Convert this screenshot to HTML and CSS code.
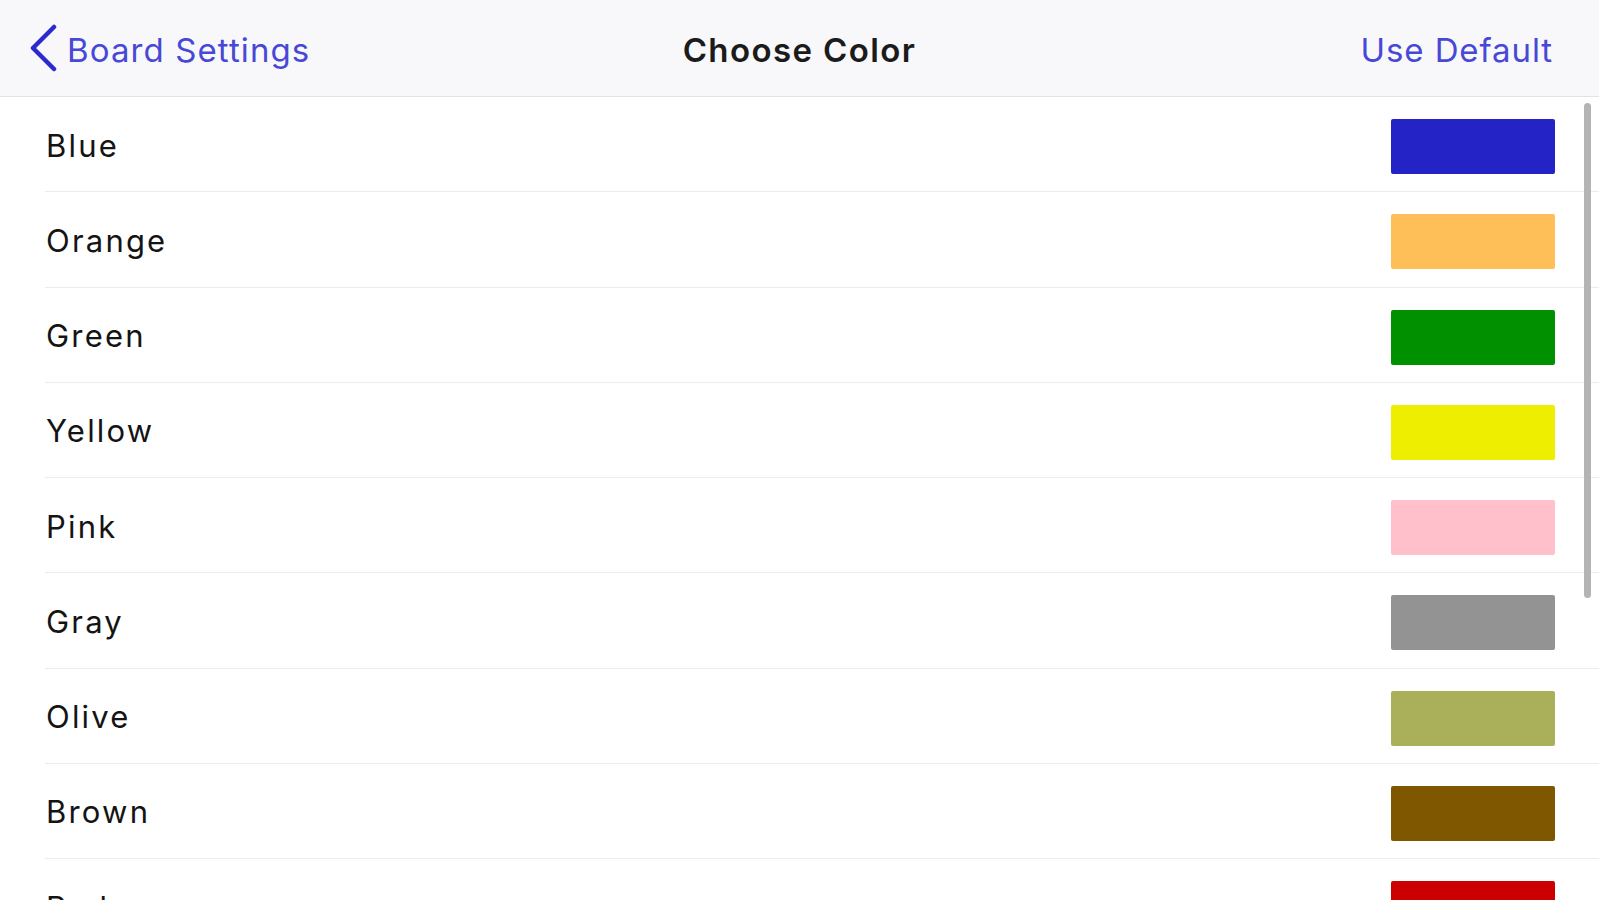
FILE: index.html
```html
<!DOCTYPE html>
<html>
<head>
<meta charset="utf-8">
<link rel="stylesheet" href="styles.css">
</head>
<body>
<header class="navbar">
  <a class="nav-back">
    <svg class="chevron" width="30" height="48" viewBox="0 0 30 48"><path d="M24 3 L3 24 L24 45" fill="none" stroke="#2a2ad0" stroke-width="4.5" stroke-linecap="round" stroke-linejoin="round"/></svg>
    <span>Board Settings</span>
  </a>
  <h1 class="nav-title">Choose Color</h1>
  <a class="nav-action">Use Default</a>
</header>
<main class="list">
  <div class="row"><span class="label">Blue</span><span class="swatch" style="background:#2424c6"></span></div>
  <div class="row"><span class="label">Orange</span><span class="swatch" style="background:#ffbf58"></span></div>
  <div class="row"><span class="label">Green</span><span class="swatch" style="background:#009000"></span></div>
  <div class="row"><span class="label">Yellow</span><span class="swatch" style="background:#eeee00"></span></div>
  <div class="row"><span class="label">Pink</span><span class="swatch" style="background:#ffc0cb"></span></div>
  <div class="row"><span class="label">Gray</span><span class="swatch" style="background:#939393"></span></div>
  <div class="row"><span class="label">Olive</span><span class="swatch" style="background:#aab05a"></span></div>
  <div class="row"><span class="label">Brown</span><span class="swatch" style="background:#7f5700"></span></div>
  <div class="row"><span class="label">Red</span><span class="swatch" style="background:#cc0000"></span></div>
</main>
<div class="scroll-indicator"></div>
</body>
</html>
```
FILE: styles.css
```css
html, body {
  margin: 0;
  padding: 0;
  height: 100%;
  overflow: hidden;
  background: #ffffff;
  font-family: "Inter", "Liberation Sans", sans-serif;
}

.navbar {
  height: 96px;
  background: #f8f8fa;
  border-bottom: 1px solid #e3e3e6;
  display: grid;
  grid-template-columns: 1fr auto 1fr;
  align-items: center;
  padding: 0 46px;
}

.nav-back {
  display: flex;
  align-items: center;
  gap: 7px;
  color: #4848d6;
  font-size: 33px;
  letter-spacing: 1.1px;
  justify-self: start;
  margin-left: -16px;
  margin-top: 3px;
}

.chevron {
  display: block;
  margin-top: -3px;
}

.nav-title {
  margin: 0;
  font-size: 33px;
  font-weight: 600;
  color: #1b1b1b;
  letter-spacing: 1.4px;
  margin-top: 3px;
}

.nav-action {
  justify-self: end;
  color: #4848d6;
  font-size: 33px;
  letter-spacing: 0.9px;
  margin-top: 3px;
}

.list {
  display: flex;
  flex-direction: column;
}

.row {
  height: 95.25px;
  box-sizing: border-box;
  margin-left: 45px;
  padding: 0 44px 0 1px;
  border-bottom: 1px solid #ececec;
  display: flex;
  align-items: center;
  justify-content: space-between;
  flex-shrink: 0;
}

.label {
  font-size: 31px;
  letter-spacing: 2.2px;
  color: #141414;
  margin-top: 2px;
}

.swatch {
  width: 164px;
  height: 55px;
  border-radius: 2px;
  margin-top: 5px;
}

.scroll-indicator {
  position: absolute;
  left: 1584px;
  top: 103px;
  width: 7px;
  height: 495px;
  border-radius: 3.5px;
  background: #b4b4b4;
}
```
